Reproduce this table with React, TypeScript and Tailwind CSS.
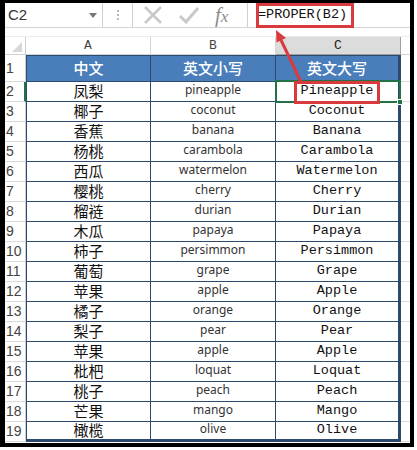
import React from "react"

const rows: [string, string][] = [
  ["凤梨", "pineapple"],
  ["椰子", "coconut"],
  ["香蕉", "banana"],
  ["杨桃", "carambola"],
  ["西瓜", "watermelon"],
  ["樱桃", "cherry"],
  ["榴裢", "durian"],
  ["木瓜", "papaya"],
  ["柿子", "persimmon"],
  ["葡萄", "grape"],
  ["苹果", "apple"],
  ["橘子", "orange"],
  ["梨子", "pear"],
  ["苹果", "apple"],
  ["枇杷", "loquat"],
  ["桃子", "peach"],
  ["芒果", "mango"],
  ["橄榄", "olive"],
]

const proper = (s: string) => s.charAt(0).toUpperCase() + s.slice(1)

const cjk = "font-['Noto_Sans_CJK_SC',sans-serif]"
const mono = "font-['Liberation_Mono',monospace]"

function FormulaBar() {
  return (
    <div className="flex h-[25px] border-b border-[#d4d4d4]">
      <div className="flex w-[98px] items-center justify-between border-r border-[#d0d0d0] pl-[3px] pr-[5px]">
        <span className="font-['Liberation_Sans',sans-serif] text-[15px] font-light text-[#333]">C2</span>
        <svg width="8" height="5" viewBox="0 0 8 5">
          <path d="M0 0h8L4 5z" fill="#777" />
        </svg>
      </div>
      <div className="flex w-[30px] items-center justify-center border-r border-[#d0d0d0]">
        <div className="flex flex-col gap-[2px]">
          <span className="h-[2px] w-[2px] bg-[#bbb]" />
          <span className="h-[2px] w-[2px] bg-[#bbb]" />
          <span className="h-[2px] w-[2px] bg-[#bbb]" />
        </div>
      </div>
      <div className="flex w-[115px] items-center gap-[16px] border-r border-[#d0d0d0] pl-[10px]">
        <svg width="20" height="18" viewBox="0 0 20 18">
          <path d="M2 1l16 16M18 1L2 17" stroke="#c9c9c9" strokeWidth="2.5" />
        </svg>
        <svg width="20" height="18" viewBox="0 0 20 18">
          <path d="M1 10l6 6L19 2" stroke="#c9c9c9" strokeWidth="3" fill="none" />
        </svg>
        <span className="font-['Liberation_Serif',serif] text-[21px] italic leading-none text-[#8c8c8c]">
          f<span className="text-[17px]">x</span>
        </span>
      </div>
      <div className="flex flex-1 items-center pl-[10px]">
        <span className={`${mono} text-[13.5px] text-[#111]`}>=PROPER(B2)</span>
      </div>
    </div>
  )
}

function ColumnHeaders() {
  return (
    <div className={`flex h-[18px] ${mono} text-[13px] text-[#444]`}>
      <div className="flex w-[21px] items-end justify-end border-r border-b border-[#cfcfcf] pb-[2px] pr-[3px]">
        <svg width="10" height="10" viewBox="0 0 10 10">
          <path d="M10 0v10H0z" fill="#d8d8d8" />
        </svg>
      </div>
      <div className="flex w-[125px] items-center justify-center border-r border-b border-[#d4d4d4]">A</div>
      <div className="flex w-[125px] items-center justify-center border-r border-b border-[#d4d4d4]">B</div>
      <div className="flex w-[125px] items-center justify-center border-r border-b border-[#9f9f9f] bg-[#dcdcdc] text-[#222]">C</div>
      <div className="flex-1 border-b border-[#d4d4d4]" />
    </div>
  )
}

function RowNum({ n, active }: { n: number; active?: boolean }) {
  return (
    <div
      className={`flex w-[21px] items-center border-b border-[#d9d9d9] pl-[1px] font-['Liberation_Sans',sans-serif] text-[14px] font-light text-[#444] ${
        active ? "border-r-2 border-r-[#217346]" : "border-r border-r-[#cfcfcf]"
      }`}
    >
      {n}
    </div>
  )
}

export default function App() {
  return (
    <div className="relative h-[450px] w-[417px] overflow-hidden bg-white">
      <div className="h-[447px] w-[414px] overflow-hidden border-t-[3px] border-r-[4px] border-b-[4px] border-l-[5px] border-black bg-white">
        <FormulaBar />
        <div className="h-[9px] border-b border-[#ececec]" />
        <ColumnHeaders />

        <div className="flex h-[27px]">
          <RowNum n={1} />
          <div className={`flex w-[125px] items-center justify-center border-x border-y border-[#2c4a6c] bg-[#4a7ebb] ${cjk} text-[15px] font-medium text-white`}>
            中文
          </div>
          <div className={`flex w-[125px] items-center justify-center border-y border-r border-[#2c4a6c] bg-[#4a7ebb] ${cjk} text-[15px] font-medium text-white`}>
            英文小写
          </div>
          <div className={`flex w-[125px] items-center justify-center border-y border-r-[3px] border-[#2c4a6c] bg-[#4a7ebb] ${cjk} text-[15px] font-medium text-white`}>
            英文大写
          </div>
          <div className="flex-1 border-b border-[#dadada]" />
        </div>

        {rows.map(([zh, en], i) => {
          const last = i === rows.length - 1
          const bb = last ? "border-b-[3px]" : "border-b"
          return (
            <div key={i} className="flex h-[20px]">
              <RowNum n={i + 2} active={i === 0} />
              <div className={`flex w-[125px] items-center justify-center border-x ${bb} border-[#2c4a6c] ${cjk} text-[15px] text-[#111]`}>
                {zh}
              </div>
              <div className={`flex w-[125px] items-center justify-center border-r ${bb} border-[#2c4a6c] pb-[3px] font-['Noto_Sans',sans-serif] text-[12px] text-[#333]`}>
                {en}
              </div>
              <div className={`flex w-[125px] items-center justify-center border-r-[3px] ${bb} border-[#2c4a6c] ${mono} text-[13.5px] text-[#111]`}>
                {proper(en)}
              </div>
              <div className="flex-1 border-b border-[#dadada]" />
            </div>
          )
        })}
      </div>

      {/* selected cell C2 */}
      <div className="absolute left-[275px] top-[80px] h-[23px] w-[126px] border-2 border-[#217346]" />
      <div className="absolute left-[397px] top-[99px] h-[6px] w-[6px] border border-white bg-[#217346]" />

      {/* red callouts */}
      <div className="absolute left-[256px] top-[3px] h-[25px] w-[98px] border-[3px] border-[#d83a3e]" />
      <div className="absolute left-[294px] top-[81px] h-[23px] w-[86px] border-[3px] border-[#d83a3e]" />
      <svg className="absolute left-0 top-0" width="417" height="450" viewBox="0 0 417 450">
        <line x1="301" y1="82" x2="281" y2="40" stroke="#d83a3e" strokeWidth="3" />
        <polygon points="276,30 286,38 276.5,42.5" fill="#d83a3e" />
      </svg>
    </div>
  )
}
